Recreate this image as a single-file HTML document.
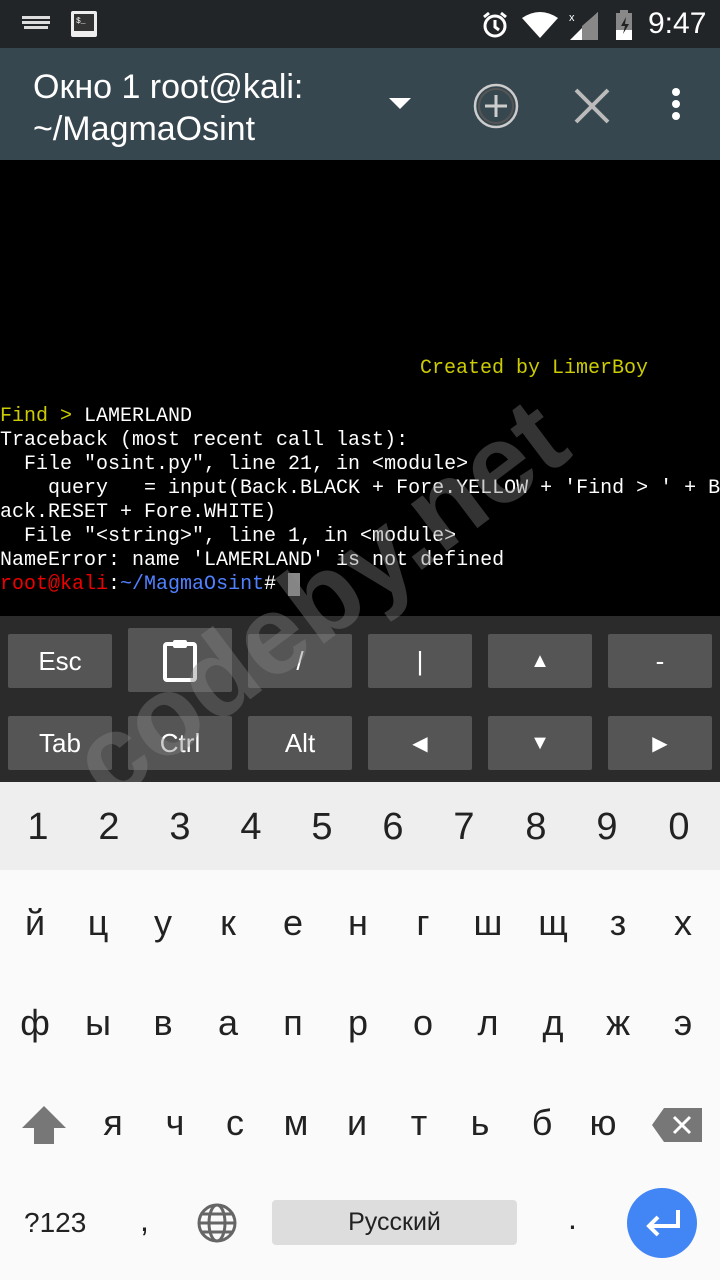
<!DOCTYPE html>
<html><head><meta charset="utf-8"><style>
*{margin:0;padding:0;box-sizing:border-box}
body{width:720px;height:1280px;overflow:hidden;position:relative;background:#000;font-family:"Liberation Sans",sans-serif}
.sb{position:absolute;top:0;left:0;width:720px;height:48px;background:#212528;color:#fff}
.ab{position:absolute;top:48px;left:0;width:720px;height:112px;background:#37474f;color:#fff}
.term{position:absolute;top:164px;left:0;width:720px;height:452px;background:#000;font-family:"Liberation Mono",monospace;font-size:20px;line-height:24px;color:#fff;white-space:pre}
.ek{position:absolute;top:616px;left:0;width:720px;height:166px;background:#2b2b2b}
.k{position:absolute;width:104px;height:54px;background:#555;color:#fff;font-size:26px;display:flex;align-items:center;justify-content:center;border-radius:2px}
.kb{position:absolute;top:782px;left:0;width:720px;height:498px;background:#fafafa;color:#222}
.row{position:absolute;left:0;width:720px;font-size:36px}
.row span{position:absolute;transform:translateX(-50%)}
</style></head><body>
<div class="sb">
<svg style="position:absolute;left:22px;top:16px" width="28" height="16"><g fill="#ddd"><rect x="0" y="0" width="28" height="3"/><rect x="0" y="5" width="28" height="3"/><rect x="2" y="10" width="24" height="3"/></g></svg>
<svg style="position:absolute;left:70px;top:10px" width="28" height="28"><rect x="1" y="1" width="26" height="26" rx="2" fill="#eee"/><rect x="4" y="4" width="20" height="17" fill="#333"/><text x="6" y="13" font-size="8" fill="#fff" font-family="Liberation Mono">$_</text></svg>
<svg style="position:absolute;left:480px;top:10px" width="30" height="30"><circle cx="15" cy="16" r="10" fill="none" stroke="#fff" stroke-width="3"/><path d="M15 10v7l4 3M4 7l5-4M26 7l-5-4" stroke="#fff" stroke-width="3" fill="none"/></svg>
<svg style="position:absolute;left:522px;top:12px" width="36" height="26"><path d="M0 6Q18-6 36 6L18 26Z" fill="#fff"/></svg>
<svg style="position:absolute;left:568px;top:10px" width="30" height="30"><path d="M30 2V30H2Z" fill="#fff"/><path d="M30 2V30H14V16Z" fill="#888"/><text x="1" y="11" font-size="11" fill="#fff">x</text></svg>
<svg style="position:absolute;left:614px;top:10px" width="20" height="30"><rect x="6" y="0" width="8" height="3" fill="#888"/><rect x="2" y="3" width="16" height="27" fill="#888"/><rect x="2" y="20" width="16" height="10" fill="#fff"/><path d="M12 7l-5 9h4l-2 8 6-10h-4z" fill="#222"/></svg>
<div style="position:absolute;left:648px;top:7px;font-size:30px">9:47</div>
</div>
<div class="ab">
<div style="position:absolute;left:33px;top:18px;font-size:34px;line-height:42px">Окно 1 root@kali:<br>~/MagmaOsint</div>
<svg style="position:absolute;left:389px;top:50px" width="22" height="12"><path d="M0 0H22L11 11Z" fill="#fff"/></svg>
<svg style="position:absolute;left:472px;top:34px" width="48" height="48"><circle cx="24" cy="24" r="21" fill="none" stroke="#ccc" stroke-width="2.5"/><circle cx="24" cy="24" r="17" fill="none" stroke="#555" stroke-width="2"/><path d="M24 13v22M13 24h22" stroke="#ccc" stroke-width="3"/></svg>
<svg style="position:absolute;left:572px;top:38px" width="40" height="40"><path d="M4 4L36 36M36 4L4 36" stroke="#bbb" stroke-width="4"/></svg>
<svg style="position:absolute;left:668px;top:38px" width="16" height="36"><circle cx="8" cy="6" r="4" fill="#fff"/><circle cx="8" cy="18" r="4" fill="#fff"/><circle cx="8" cy="30" r="4" fill="#fff"/></svg>
</div>
<div class="term"><div style="position:absolute;top:193px;left:420px;color:#cccc00">Created by LimerBoy</div><div style="position:absolute;top:241px;left:0"><span style="color:#cccc00">Find &gt; </span>LAMERLAND
Traceback (most recent call last):
  File "osint.py", line 21, in &lt;module&gt;
    query   = input(Back.BLACK + Fore.YELLOW + 'Find &gt; ' + B
ack.RESET + Fore.WHITE)
  File "&lt;string&gt;", line 1, in &lt;module&gt;
NameError: name 'LAMERLAND' is not defined
<span style="color:#e00">root@kali</span>:<span style="color:#5080ff">~/MagmaOsint</span># <span style="background:#888">&nbsp;</span></div></div>
<div class="ek">
<div class="k" style="left:8px;top:18px">Esc</div>
<div class="k" style="left:128px;top:12px;height:64px"><svg width="36" height="44"><rect x="3" y="6" width="30" height="36" rx="2" fill="none" stroke="#fff" stroke-width="4"/><rect x="11" y="2" width="14" height="8" rx="2" fill="#fff"/></svg></div>
<div class="k" style="left:248px;top:18px">/</div>
<div class="k" style="left:368px;top:18px">|</div>
<div class="k" style="left:488px;top:18px;font-size:20px">▲</div>
<div class="k" style="left:608px;top:18px">-</div>
<div class="k" style="left:8px;top:100px">Tab</div>
<div class="k" style="left:128px;top:100px">Ctrl</div>
<div class="k" style="left:248px;top:100px">Alt</div>
<div class="k" style="left:368px;top:100px;font-size:20px">◀</div>
<div class="k" style="left:488px;top:100px;font-size:20px">▼</div>
<div class="k" style="left:608px;top:100px;font-size:20px">▶</div>
</div>
<div style="position:absolute;left:120px;top:708px;font-size:112px;line-height:112px;font-weight:bold;color:rgba(130,130,130,0.4);transform:rotate(-37deg);transform-origin:left bottom;white-space:nowrap">codeby.net</div>
<div class="kb">
<div style="position:absolute;top:0;left:0;width:720px;height:88px;background:#eeeeee"></div>
<div class="row" style="top:24px;font-size:38px"><span style="left:38px">1</span><span style="left:109px">2</span><span style="left:180px">3</span><span style="left:251px">4</span><span style="left:322px">5</span><span style="left:393px">6</span><span style="left:464px">7</span><span style="left:536px">8</span><span style="left:607px">9</span><span style="left:679px">0</span></div>
<div class="row" style="top:120px"><span style="left:35px">й</span><span style="left:98px">ц</span><span style="left:163px">у</span><span style="left:228px">к</span><span style="left:293px">е</span><span style="left:358px">н</span><span style="left:423px">г</span><span style="left:488px">ш</span><span style="left:553px">щ</span><span style="left:618px">з</span><span style="left:683px">х</span></div>
<div class="row" style="top:220px"><span style="left:35px">ф</span><span style="left:98px">ы</span><span style="left:163px">в</span><span style="left:228px">а</span><span style="left:293px">п</span><span style="left:358px">р</span><span style="left:423px">о</span><span style="left:488px">л</span><span style="left:553px">д</span><span style="left:618px">ж</span><span style="left:683px">э</span></div>
<div class="row" style="top:320px"><span style="left:113px">я</span><span style="left:175px">ч</span><span style="left:235px">с</span><span style="left:296px">м</span><span style="left:357px">и</span><span style="left:419px">т</span><span style="left:480px">ь</span><span style="left:542px">б</span><span style="left:603px">ю</span></div>
<svg style="position:absolute;left:20px;top:322px" width="48" height="42"><path d="M24 2L46 24H34V40H14V24H2Z" fill="#777"/></svg>
<svg style="position:absolute;left:652px;top:326px" width="50" height="34"><path d="M12 0H50V34H12L0 17Z" fill="#777"/><path d="M22 9l16 16M38 9L22 25" stroke="#fff" stroke-width="3"/></svg>
<div style="position:absolute;left:24px;top:425px;font-size:28px">?123</div>
<div style="position:absolute;left:140px;top:420px;font-size:32px">,</div>
<svg style="position:absolute;left:196px;top:420px" width="42" height="42"><g fill="none" stroke="#666" stroke-width="3"><circle cx="21" cy="21" r="18"/><ellipse cx="21" cy="21" rx="8" ry="18"/><path d="M3 21h36M6 12h30M6 30h30"/></g></svg>
<div style="position:absolute;left:272px;top:418px;width:245px;height:45px;background:#ddd;border-radius:4px;font-size:25px;display:flex;align-items:center;justify-content:center">Русский</div>
<div style="position:absolute;left:568px;top:418px;font-size:32px">.</div>
<div style="position:absolute;left:627px;top:406px;width:70px;height:70px;border-radius:50%;background:#4285f4"></div>
<svg style="position:absolute;left:642px;top:424px" width="40" height="34"><path d="M36 4V20H8M16 11L7 20L16 29" stroke="#fff" stroke-width="4" fill="none"/></svg>
</div>
</body></html>
